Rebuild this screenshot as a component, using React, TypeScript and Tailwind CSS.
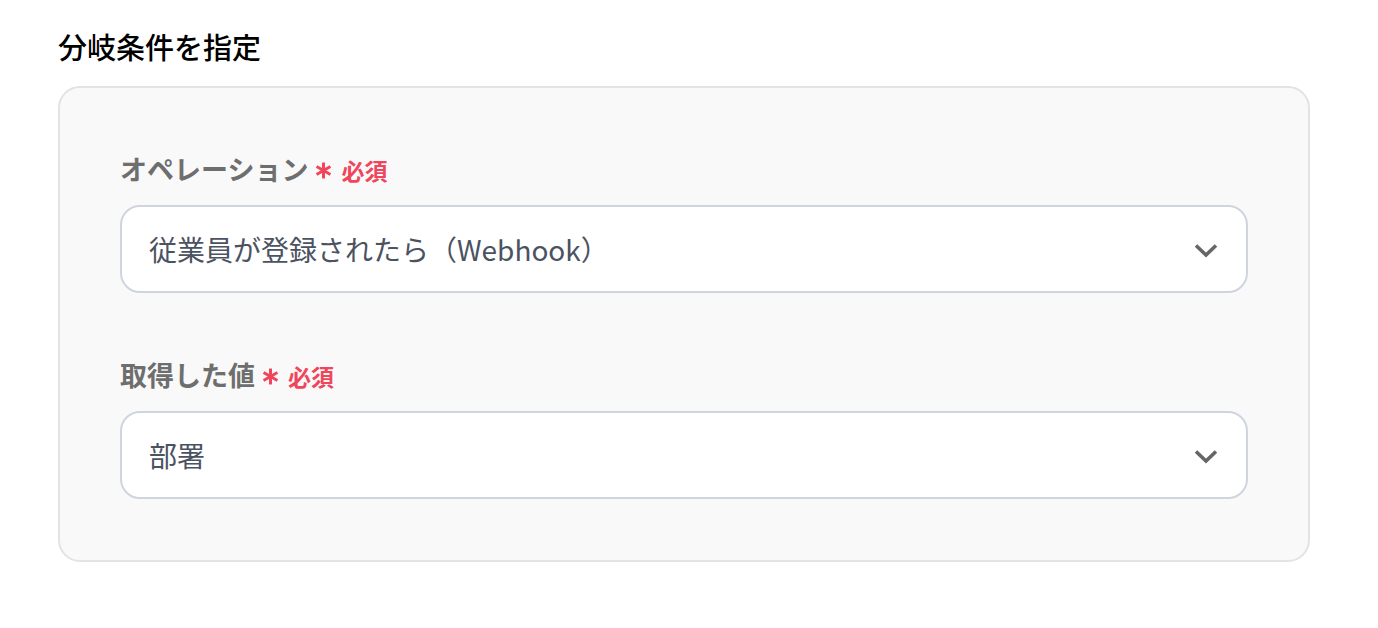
import React from "react";

const font = { fontFamily: '"Noto Sans CJK JP", "Noto Sans", sans-serif' };

function Asterisk() {
  return (
    <svg width="17" height="17" viewBox="0 0 16 16" className="shrink-0">
      <g stroke="#f0455a" strokeWidth="2.8" strokeLinecap="butt">
        <line x1="8" y1="0.5" x2="8" y2="15.5" />
        <line x1="1.5" y1="4.25" x2="14.5" y2="11.75" />
        <line x1="1.5" y1="11.75" x2="14.5" y2="4.25" />
      </g>
    </svg>
  );
}

function Chevron() {
  return (
    <svg width="24" height="15" viewBox="0 0 24 15">
      <polyline points="2,2.5 12,12 22,2.5" fill="none" stroke="#666" strokeWidth="3.6" />
    </svg>
  );
}

function Field({ label, value }: { label: string; value: string }) {
  return (
    <div className="flex flex-col">
      <div className="flex items-center h-[36px] overflow-visible">
        <span className="text-[27px] font-bold text-[#6e6e6e] leading-[36px]">{label}</span>
        <span className="ml-[7px] mr-[9px] mt-[3px] flex"><Asterisk /></span>
        <span className="text-[23px] font-bold text-[#f0455a] leading-[36px] mt-[2px]">必須</span>
      </div>
      <div className="mt-[18px] h-[88px] rounded-[20px] border-2 border-[#cfd4de] bg-white flex items-center justify-between pl-[27px] pr-[28px]">
        <span className="text-[28px] text-[#4b5261] leading-[40px]">{value}</span>
        <span className="mt-[2px] flex"><Chevron /></span>
      </div>
    </div>
  );
}

export default function App() {
  return (
    <div style={font} className="w-[1378px] h-[628px] bg-white pl-[58px] pt-[26px]">
      <div className="text-[29px] font-medium text-black leading-[40px] h-[40px]">分岐条件を指定</div>
      <div className="mt-[20px] w-[1252px] rounded-[22px] border-2 border-[#e3e3e3] bg-[#f9f9f9] pt-[63px] pb-[61px] px-[60px] flex flex-col gap-[64px]">
        <Field label="オペレーション" value="従業員が登録されたら（Webhook）" />
        <Field label="取得した値" value="部署" />
      </div>
    </div>
  );
}
